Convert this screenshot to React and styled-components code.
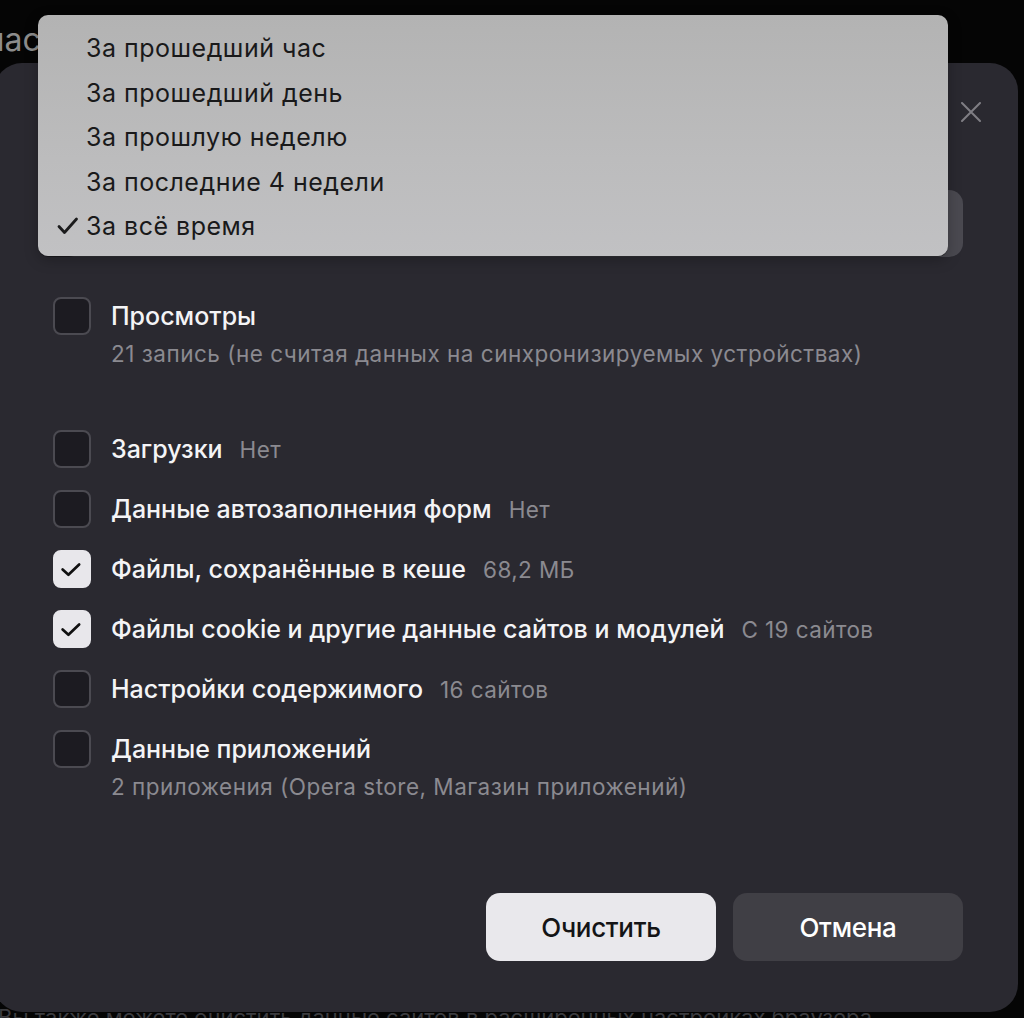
import React from "react";
import styled, { createGlobalStyle } from "styled-components";

const Global = createGlobalStyle`
  html, body { margin: 0; padding: 0; background: #000; }
  body { width: 1024px; height: 1018px; overflow: hidden; font-family: "Inter", "Noto Sans", sans-serif; }
  * { box-sizing: border-box; }
`;

const Page = styled.div`
  position: relative;
  width: 1024px;
  height: 1018px;
  overflow: hidden;
  background: #050505;
`;

const BgHeading = styled.div`
  padding: 20px 0 0 0;
  margin-left: -14px;
  font-size: 32px;
  color: #8c8c8c;
  white-space: nowrap;
`;

const BgFooter = styled.div`
  position: absolute;
  left: -2px;
  top: 1004px;
  font-size: 22px;
  color: #3c3c40;
  white-space: nowrap;
`;

const Dialog = styled.div`
  position: absolute;
  left: -6px;
  top: 63px;
  width: 1024px;
  height: 949px;
  border-radius: 28px;
  background: #2a2930;
  padding: 0 55px 0 59px;
  display: flex;
  flex-direction: column;
`;

const Header = styled.div`
  height: 127px;
  display: flex;
  align-items: flex-start;
  justify-content: flex-end;
  padding-top: 39px;
`;

const CloseButton = styled.button`
  width: 20px;
  height: 20px;
  padding: 0;
  margin-right: -18px;
  border: none;
  background: none;
  display: flex;
  align-items: center;
  justify-content: center;
`;

const SelectBox = styled.div`
  height: 67px;
  margin-left: 7px;
  border-radius: 14px;
  background: #4a4950;
`;

const List = styled.div`
  display: flex;
  flex-direction: column;
  padding-top: 40px;
`;

const Group = styled.div`
  display: flex;
  flex-direction: column;
  gap: 22px;
  margin-bottom: ${(p) => p.$mb || 0}px;
`;

const Row = styled.div`
  display: flex;
  align-items: flex-start;
  gap: 20px;
`;

const Box = styled.div`
  flex: none;
  width: 38px;
  height: 38px;
  border-radius: 8px;
  border: 2px solid ${(p) => (p.$checked ? "#e8e7eb" : "#4b4a51")};
  background: ${(p) => (p.$checked ? "#e8e7eb" : "#1c1b21")};
  display: flex;
  align-items: center;
  justify-content: center;
`;

const TextCol = styled.div`
  display: flex;
  flex-direction: column;
  gap: 9px;
  padding-top: 4px;
`;

const LabelLine = styled.div`
  display: flex;
  align-items: baseline;
  gap: 17px;
  line-height: 30px;
  white-space: nowrap;
`;

const Label = styled.span`
  font-size: 25px;
  font-weight: 500;
  letter-spacing: 0;
  color: #f4f4f6;
`;

const Meta = styled.span`
  font-size: 22.5px;
  letter-spacing: 0.4px;
  color: #8b8a90;
`;

const Sub = styled.div`
  font-size: 22.5px;
  letter-spacing: 0.5px;
  line-height: 28px;
  color: #8b8a90;
  white-space: nowrap;
`;

const Footer = styled.div`
  margin-top: auto;
  margin-bottom: 51px;
  display: flex;
  justify-content: flex-end;
  gap: 17px;
`;

const Button = styled.button`
  width: 230px;
  height: 68px;
  border: none;
  border-radius: 14px;
  font-family: "Inter", "Noto Sans", sans-serif;
  font-size: 26px;
  font-weight: 500;
  letter-spacing: -0.3px;
  background: ${(p) => (p.$primary ? "#e9e8ec" : "#403f45")};
  color: ${(p) => (p.$primary ? "#141416" : "#ffffff")};
`;

const Menu = styled.div`
  position: absolute;
  left: 38px;
  top: 15px;
  width: 910px;
  height: 241px;
  border-radius: 10px;
  background: linear-gradient(180deg, #b3b3b3 0%, #bcbcbd 60%, #c1c1c3 100%);
  box-shadow: 0 1px 0 rgba(0, 0, 0, 0.35), 0 4px 14px rgba(0, 0, 0, 0.25);
  padding-top: 11px;
  display: flex;
  flex-direction: column;
`;

const MenuItem = styled.div`
  height: 44.5px;
  display: flex;
  align-items: center;
  font-size: 25px;
  letter-spacing: 0.5px;
  color: #19191a;
  font-family: "Inter", "Noto Sans", sans-serif;
`;

const Mark = styled.span`
  width: 48px;
  padding-left: 19px;
  display: flex;
  align-items: center;
`;

const MenuCheck = () => (
  <svg width="22" height="18" viewBox="0 0 22 18">
    <path d="M2 9.5 L7.5 15.5 L19.5 2" fill="none" stroke="#1b1b1c" strokeWidth="2.8" strokeLinecap="round" strokeLinejoin="round" />
  </svg>
);

const CheckIcon = () => (
  <svg width="38" height="38" viewBox="0 0 38 38">
    <path d="M8.5 19.5 L15 25.5 L27 14" fill="none" stroke="#111" strokeWidth="3" strokeLinecap="round" strokeLinejoin="round" />
  </svg>
);

const CloseIcon = () => (
  <svg width="20" height="20" viewBox="0 0 20 20">
    <path d="M1 1 L19 19 M19 1 L1 19" stroke="#7f7e84" strokeWidth="2" strokeLinecap="round" />
  </svg>
);

const menuItems = [
  { t: "За прошедший час" },
  { t: "За прошедший день" },
  { t: "За прошлую неделю" },
  { t: "За последние 4 недели" },
  { t: "За всё время", on: true },
];

const rows = [
  { label: "Загрузки", meta: "Нет" },
  { label: "Данные автозаполнения форм", meta: "Нет" },
  { label: "Файлы, сохранённые в кеше", meta: "68,2 МБ", checked: true },
  { label: "Файлы cookie и другие данные сайтов и модулей", meta: "С 19 сайтов", checked: true },
  { label: "Настройки содержимого", meta: "16 сайтов" },
  { label: "Данные приложений", sub: "2 приложения (Opera store, Магазин приложений)" },
];

const Item = ({ label, meta, sub, checked }) => (
  <Row>
    <Box $checked={checked}>{checked && <CheckIcon />}</Box>
    <TextCol>
      <LabelLine>
        <Label>{label}</Label>
        {meta && <Meta>{meta}</Meta>}
      </LabelLine>
      {sub && <Sub>{sub}</Sub>}
    </TextCol>
  </Row>
);

export default function App() {
  return (
    <Page>
      <Global />
      <BgHeading>час</BgHeading>
      <BgFooter>Вы также можете очистить данные сайтов в расширенных настройках браузера</BgFooter>
      <Dialog>
        <Header>
          <CloseButton aria-label="Закрыть">
            <CloseIcon />
          </CloseButton>
        </Header>
        <SelectBox />
        <List>
          <Group $mb={62}>
            <Item label="Просмотры" sub="21 запись (не считая данных на синхронизируемых устройствах)" />
          </Group>
          <Group>
            {rows.map((r) => (
              <Item key={r.label} {...r} />
            ))}
          </Group>
        </List>
        <Footer>
          <Button $primary>Очистить</Button>
          <Button>Отмена</Button>
        </Footer>
      </Dialog>
      <Menu>
        {menuItems.map((m) => (
          <MenuItem key={m.t}>
            <Mark>{m.on && <MenuCheck />}</Mark>
            {m.t}
          </MenuItem>
        ))}
      </Menu>
    </Page>
  );
}
